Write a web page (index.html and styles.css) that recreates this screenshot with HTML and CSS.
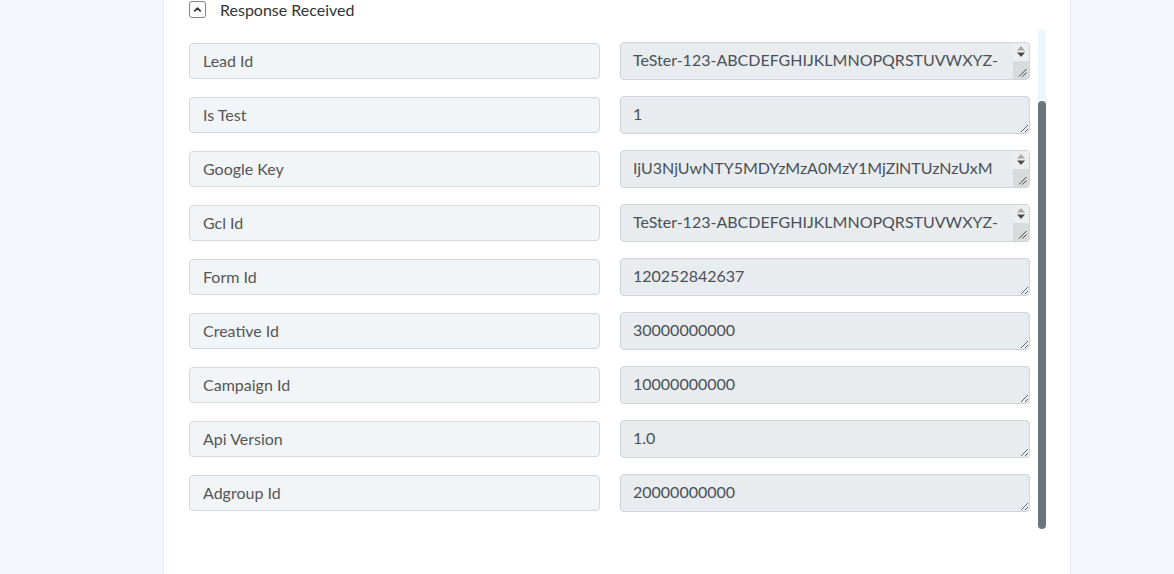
FILE: index.html
```html
<!DOCTYPE html>
<html lang="en">
<head>
    <meta charset="UTF-8">
    <meta name="viewport" content="width=device-width, initial-scale=1.0">
    <title>Response Received</title>
    <link rel="stylesheet" href="styles.css">
</head>
<body>
    <div class="card">
        <div class="section-header">
            <button class="toggle-btn" type="button" aria-label="Collapse">
                <svg width="11" height="11" viewBox="0 0 12 12">
                    <path d="M3 7.5 L6 4.5 L9 7.5" fill="none" stroke="#333" stroke-width="1.8" stroke-linecap="round" stroke-linejoin="round"/>
                </svg>
            </button>
            <span>Response Received</span>
        </div>

        <div class="response-box">
            <div class="field-list">
                <div class="field-row">
                    <input class="field-key" type="text" value="Lead Id" readonly>
                    <div class="value-wrap">
                        <textarea class="field-value long" disabled>TeSter-123-ABCDEFGHIJKLMNOPQRSTUVWXYZ-abcdefghijklmnopqrstuvwxyz-0123456789-AaBbCcDdEeFfGg</textarea>
                        <div class="mini-scroll">
                            <div class="mini-arrows">
                                <svg width="8" height="12" viewBox="0 0 8 12"><path d="M0 4.5 L4 0 L8 4.5 Z" fill="#a8a8a8"/><path d="M0 6.5 L8 6.5 L4 11 Z" fill="#4a4a4a"/></svg>
                            </div>
                            <div class="mini-corner">
                                <svg width="9" height="9" viewBox="0 0 9 9"><path d="M1 8.5 L8.5 1 M4.5 8.5 L8.5 4.5" stroke="#444" stroke-width="1"/></svg>
                            </div>
                        </div>
                    </div>
                </div>
                <div class="field-row">
                    <input class="field-key" type="text" value="Is Test" readonly>
                    <div class="value-wrap">
                        <textarea class="field-value" disabled>1</textarea>
                    </div>
                </div>
                <div class="field-row">
                    <input class="field-key" type="text" value="Google Key" readonly>
                    <div class="value-wrap">
                        <textarea class="field-value long" disabled>IjU3NjUwNTY5MDYzMzA0MzY1MjZlNTUzNzUxMmMwNDYyNTFhNDk2NzRjNjQ5YjUwMmZkZGJjOGRhMjA5NmZhYmVkOTA3NzQ0Y2Mi</textarea>
                        <div class="mini-scroll">
                            <div class="mini-arrows">
                                <svg width="8" height="12" viewBox="0 0 8 12"><path d="M0 4.5 L4 0 L8 4.5 Z" fill="#a8a8a8"/><path d="M0 6.5 L8 6.5 L4 11 Z" fill="#4a4a4a"/></svg>
                            </div>
                            <div class="mini-corner">
                                <svg width="9" height="9" viewBox="0 0 9 9"><path d="M1 8.5 L8.5 1 M4.5 8.5 L8.5 4.5" stroke="#444" stroke-width="1"/></svg>
                            </div>
                        </div>
                    </div>
                </div>
                <div class="field-row">
                    <input class="field-key" type="text" value="Gcl Id" readonly>
                    <div class="value-wrap">
                        <textarea class="field-value long" disabled>TeSter-123-ABCDEFGHIJKLMNOPQRSTUVWXYZ-abcdefghijklmnopqrstuvwxyz-0123456789-AaBbCcDdEeFfGg</textarea>
                        <div class="mini-scroll">
                            <div class="mini-arrows">
                                <svg width="8" height="12" viewBox="0 0 8 12"><path d="M0 4.5 L4 0 L8 4.5 Z" fill="#a8a8a8"/><path d="M0 6.5 L8 6.5 L4 11 Z" fill="#4a4a4a"/></svg>
                            </div>
                            <div class="mini-corner">
                                <svg width="9" height="9" viewBox="0 0 9 9"><path d="M1 8.5 L8.5 1 M4.5 8.5 L8.5 4.5" stroke="#444" stroke-width="1"/></svg>
                            </div>
                        </div>
                    </div>
                </div>
                <div class="field-row">
                    <input class="field-key" type="text" value="Form Id" readonly>
                    <div class="value-wrap">
                        <textarea class="field-value" disabled>120252842637</textarea>
                    </div>
                </div>
                <div class="field-row">
                    <input class="field-key" type="text" value="Creative Id" readonly>
                    <div class="value-wrap">
                        <textarea class="field-value" disabled>30000000000</textarea>
                    </div>
                </div>
                <div class="field-row">
                    <input class="field-key" type="text" value="Campaign Id" readonly>
                    <div class="value-wrap">
                        <textarea class="field-value" disabled>10000000000</textarea>
                    </div>
                </div>
                <div class="field-row">
                    <input class="field-key" type="text" value="Api Version" readonly>
                    <div class="value-wrap">
                        <textarea class="field-value" disabled>1.0</textarea>
                    </div>
                </div>
                <div class="field-row">
                    <input class="field-key" type="text" value="Adgroup Id" readonly>
                    <div class="value-wrap">
                        <textarea class="field-value" disabled>20000000000</textarea>
                    </div>
                </div>
            </div>

            <div class="scroll-track">
                <div class="scroll-thumb"></div>
            </div>
        </div>
    </div>
</body>
</html>
```

FILE: styles.css
```css
* {
    margin: 0;
    padding: 0;
    box-sizing: border-box;
}

body {
    font-family: Lato, 'Open Sans', sans-serif;
    background: #f3f6fa;
    color: #333;
    height: 574px;
    overflow: hidden;
}

.card {
    width: 908px;
    height: 574px;
    margin-left: 163px;
    background: white;
    border-left: 1px solid #e5e8ee;
    border-right: 1px solid #e5e8ee;
    padding: 0 0 0 25px;
}

.section-header {
    display: flex;
    align-items: center;
    gap: 14px;
    height: 19px;
    font-size: 16px;
    line-height: 18px;
    color: #333;
}

.toggle-btn {
    width: 17px;
    height: 17px;
    border: 1px solid #7d838a;
    border-radius: 3px;
    background: white;
    display: flex;
    align-items: center;
    justify-content: center;
}

.response-box {
    display: flex;
    margin-top: 10px;
    height: 500px;
}

.field-list {
    display: flex;
    flex-direction: column;
    gap: 16px;
    padding-top: 13px;
}

.field-row {
    display: grid;
    grid-template-columns: 411px 410px;
    gap: 20px;
    align-items: center;
}

.field-key {
    height: 36px;
    padding: 0 13px 1px;
    font-family: inherit;
    font-size: 16px;
    color: #555;
    background: #f2f5f8;
    border: 1px solid #d4d9df;
    border-radius: 4px;
    outline: none;
}

.value-wrap {
    position: relative;
}

.field-value {
    display: block;
    width: 100%;
    height: 38px;
    padding: 5px 12px;
    font-family: inherit;
    font-size: 16px;
    line-height: 24px;
    color: #495057;
    background: #e9ecef;
    border: 1px solid #ced4da;
    border-radius: 4px;
    resize: vertical;
    overflow: hidden;
}

/* long values leave room for the little scroller */
.field-value.long {
    padding-right: 28px;
}

.mini-scroll {
    position: absolute;
    top: 1px;
    right: 1px;
    bottom: 1px;
    width: 16px;
    display: flex;
    flex-direction: column;
    border-radius: 0 3px 3px 0;
    overflow: hidden;
}

.mini-arrows {
    height: 18px;
    display: flex;
    align-items: center;
    justify-content: center;
    background: #eceeef;
}

.mini-corner {
    flex: 1;
    display: flex;
    align-items: flex-end;
    justify-content: flex-end;
    padding: 0 2px 2px 0;
    background: #d9dadb;
}

/* Custom scrollbar for the response list */
.scroll-track {
    width: 8px;
    margin-left: 8px;
    background: #eef5fd;
    border-radius: 4px;
    display: flex;
    flex-direction: column;
}

.scroll-thumb {
    margin-top: 72px;
    height: 428px;
    background: #6c757d;
    border-radius: 4px;
}
```
